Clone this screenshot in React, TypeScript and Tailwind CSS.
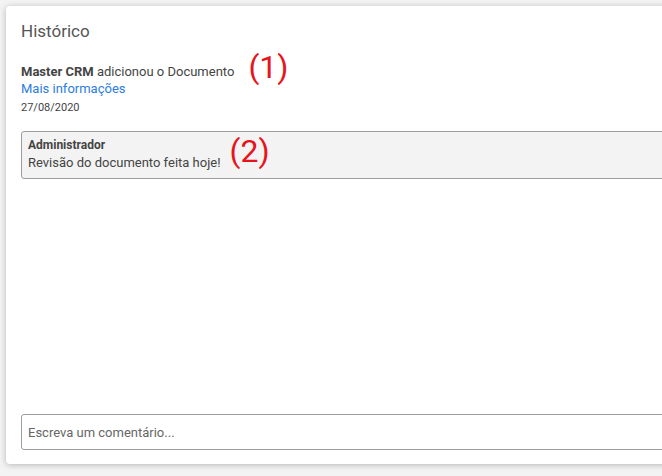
import React from 'react';

export default function App() {
  return (
    <div className="w-[662px] h-[476px] overflow-hidden bg-[#f3f3f3] pt-[6px] pl-[6px]" style={{ fontFamily: 'Roboto, sans-serif' }}>
      <div className="w-[700px] h-[458px] bg-white rounded-[4px] shadow-[0_1px_6px_rgba(0,0,0,0.25)] flex flex-col px-[15px] pt-[14px] pb-[15px]">
        {/* Header */}
        <h2 className="text-[17px] text-[#555] leading-[22px]">Histórico</h2>

        {/* Activity */}
        <div className="mt-[21px] flex items-start">
          <div className="text-[13px] leading-[17px] text-[#444]">
            <div><span className="font-bold">Master CRM</span> adicionou o Documento</div>
            <a className="text-[#2b7de1] cursor-pointer">Mais informações</a>
            <div className="text-[11px] text-[#444] mt-[2px]">27/08/2020</div>
          </div>
          <span className="ml-[14px] -mt-[14px] text-[32px] leading-[36px] text-[#e8141c]">(1)</span>
        </div>

        {/* Comment */}
        <div className="mt-[15px] bg-[#f3f3f3] border border-[#9e9e9e] rounded-[3px] h-[48px] px-[6px] pt-[5px] flex items-start">
          <div className="text-[13px] leading-[17px] text-[#444]">
            <div className="font-bold text-[12px]">Administrador</div>
            <div>Revisão do documento feita hoje!</div>
          </div>
          <span className="ml-[9px] -mt-[4px] text-[32px] leading-[36px] text-[#e8141c]">(2)</span>
        </div>

        <div className="flex-1" />

        {/* Input */}
        <input
          type="text"
          placeholder="Escreva um comentário..."
          className="h-[36px] mb-[-1px] border border-[#9e9e9e] rounded-[3px] px-[6px] text-[13px] text-[#444] placeholder:text-[#666] outline-none"
        />
      </div>
    </div>
  );
}
